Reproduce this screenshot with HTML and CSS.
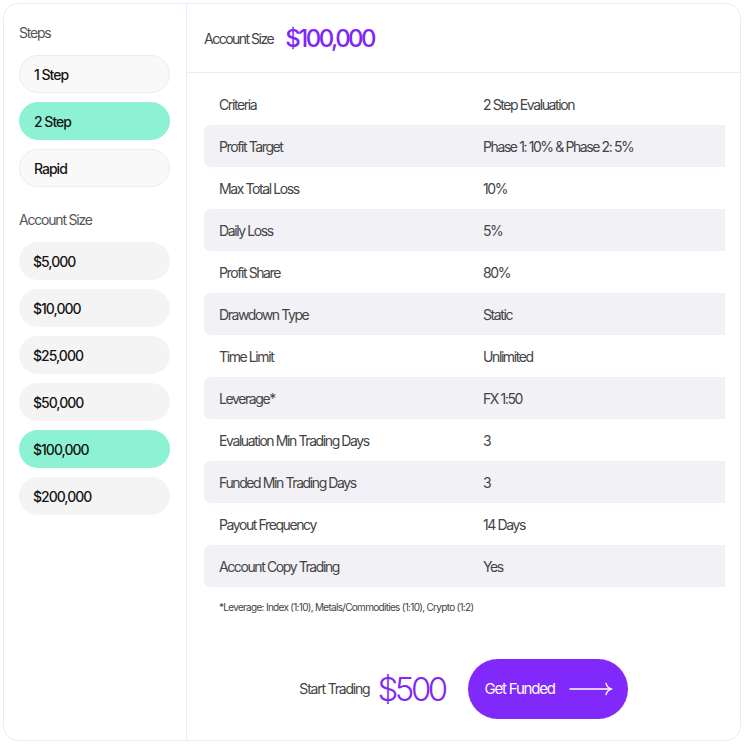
FILE: index.html
```html
<!DOCTYPE html>
<html lang="en">
<head>
    <meta charset="UTF-8">
    <meta name="viewport" content="width=device-width, initial-scale=1.0">
    <title>Challenge Picker</title>
    <link rel="stylesheet" href="styles.css">
</head>
<body>
    <div class="card">
        <div class="sidebar">
            <div class="side-label">Steps</div>
            <div class="pill-list">
                <div class="pill pill-step">1 Step</div>
                <div class="pill pill-step active">2 Step</div>
                <div class="pill pill-step">Rapid</div>
            </div>
            <div class="side-label side-label-gap">Account Size</div>
            <div class="pill-list">
                <div class="pill">$5,000</div>
                <div class="pill">$10,000</div>
                <div class="pill">$25,000</div>
                <div class="pill">$50,000</div>
                <div class="pill active">$100,000</div>
                <div class="pill">$200,000</div>
            </div>
        </div>
        <div class="main">
            <div class="main-header">
                <span class="header-label">Account Size</span>
                <span class="header-value">$100,000</span>
            </div>
            <div class="rules">
                <div class="rule"><span>Criteria</span><span>2 Step Evaluation</span></div>
                <div class="rule"><span>Profit Target</span><span>Phase 1: 10% &amp; Phase 2: 5%</span></div>
                <div class="rule"><span>Max Total Loss</span><span>10%</span></div>
                <div class="rule"><span>Daily Loss</span><span>5%</span></div>
                <div class="rule"><span>Profit Share</span><span>80%</span></div>
                <div class="rule"><span>Drawdown Type</span><span>Static</span></div>
                <div class="rule"><span>Time Limit</span><span>Unlimited</span></div>
                <div class="rule"><span>Leverage*</span><span>FX 1:50</span></div>
                <div class="rule"><span>Evaluation Min Trading Days</span><span>3</span></div>
                <div class="rule"><span>Funded Min Trading Days</span><span>3</span></div>
                <div class="rule"><span>Payout Frequency</span><span>14 Days</span></div>
                <div class="rule"><span>Account Copy Trading</span><span>Yes</span></div>
            </div>
            <p class="footnote">*Leverage: Index (1:10), Metals/Commodities (1:10), Crypto (1:2)</p>
            <div class="checkout">
                <span class="checkout-label">Start Trading</span>
                <span class="checkout-price">$500</span>
                <button class="btn-funded">
                    Get Funded
                    <svg width="44" height="14" viewBox="0 0 44 14" fill="none" stroke="white" stroke-width="1.4" stroke-linecap="round">
                        <path d="M1 7H42"/>
                        <path d="M37 1.5C38 4.5 40 6.3 42 7C40 7.7 38 9.5 37 12.5"/>
                    </svg>
                </button>
            </div>
        </div>
    </div>
</body>
</html>
```

FILE: styles.css
```css
body {
    margin: 0;
    padding: 3px;
    font-family: Inter, "Noto Sans", sans-serif;
    background-color: #ffffff;
    color: #444;
    letter-spacing: -1.2px;
}
.card {
    display: grid;
    grid-template-columns: 183px 1fr;
    height: 738px;
    box-sizing: border-box;
    border: 1px solid #ede9fb;
    border-radius: 15px;
    overflow: hidden;
}
.sidebar {
    padding: 19px 16px 0 15px;
    border-right: 1px solid #ede9fb;
}
.side-label {
    font-size: 14px;
    line-height: 20px;
    color: #555;
    margin-bottom: 12px;
}
.side-label-gap {
    margin-top: 23px;
}
.pill-list {
    display: flex;
    flex-direction: column;
    gap: 9px;
}
.pill {
    height: 38px;
    box-sizing: border-box;
    border-radius: 19px;
    background-color: #f4f4f4;
    padding-left: 14px;
    display: flex;
    align-items: center;
    font-size: 14px;
    font-weight: 500;
    color: #151515;
    letter-spacing: -1px;
}
.pill-step {
    background-color: #f9f9f9;
    border: 1px solid #ececec;
}
.pill.active {
    background-color: #8cf2d3;
    border-color: #8cf2d3;
}
.main {
    display: flex;
    flex-direction: column;
}
.main-header {
    height: 69px;
    box-sizing: border-box;
    border-bottom: 1px solid #ede9fb;
    padding-left: 17px;
    display: flex;
    align-items: center;
    gap: 12px;
}
.header-label {
    font-size: 14px;
    color: #444;
    letter-spacing: -1.5px;
}
.header-value {
    font-size: 24px;
    font-weight: 500;
    color: #7f27f8;
    letter-spacing: -2.5px;
}
.rules {
    margin: 10px 15px 0 17px;
}
.rule {
    display: grid;
    grid-template-columns: 279px 1fr;
    height: 42px;
    align-items: center;
    font-size: 14px;
    color: #444;
    letter-spacing: -1.4px;
    border-radius: 6px 0 0 6px;
}
.rule span:first-child {
    padding-left: 15px;
}
.rule:nth-child(even) {
    background-color: #f1f1f6;
}
.footnote {
    margin: 14px 0 0 32px;
    font-size: 10px;
    color: #444;
    letter-spacing: -0.7px;
}
.checkout {
    flex: 1;
    display: flex;
    align-items: center;
    justify-content: center;
    padding-top: 24px;
}
.checkout-label {
    font-size: 14px;
    color: #444;
    margin-right: 8px;
}
.checkout-price {
    font-size: 33px;
    font-weight: 300;
    color: #7f27f8;
    letter-spacing: -3.5px;
    margin-right: 23px;
}
.btn-funded {
    width: 160px;
    height: 60px;
    border: none;
    border-radius: 30px;
    background-color: #8129fa;
    color: white;
    font-family: inherit;
    font-size: 15px;
    letter-spacing: -1.2px;
    display: flex;
    align-items: center;
    justify-content: center;
    gap: 14px;
    padding: 0 0 0 2px;
    cursor: pointer;
}
```
